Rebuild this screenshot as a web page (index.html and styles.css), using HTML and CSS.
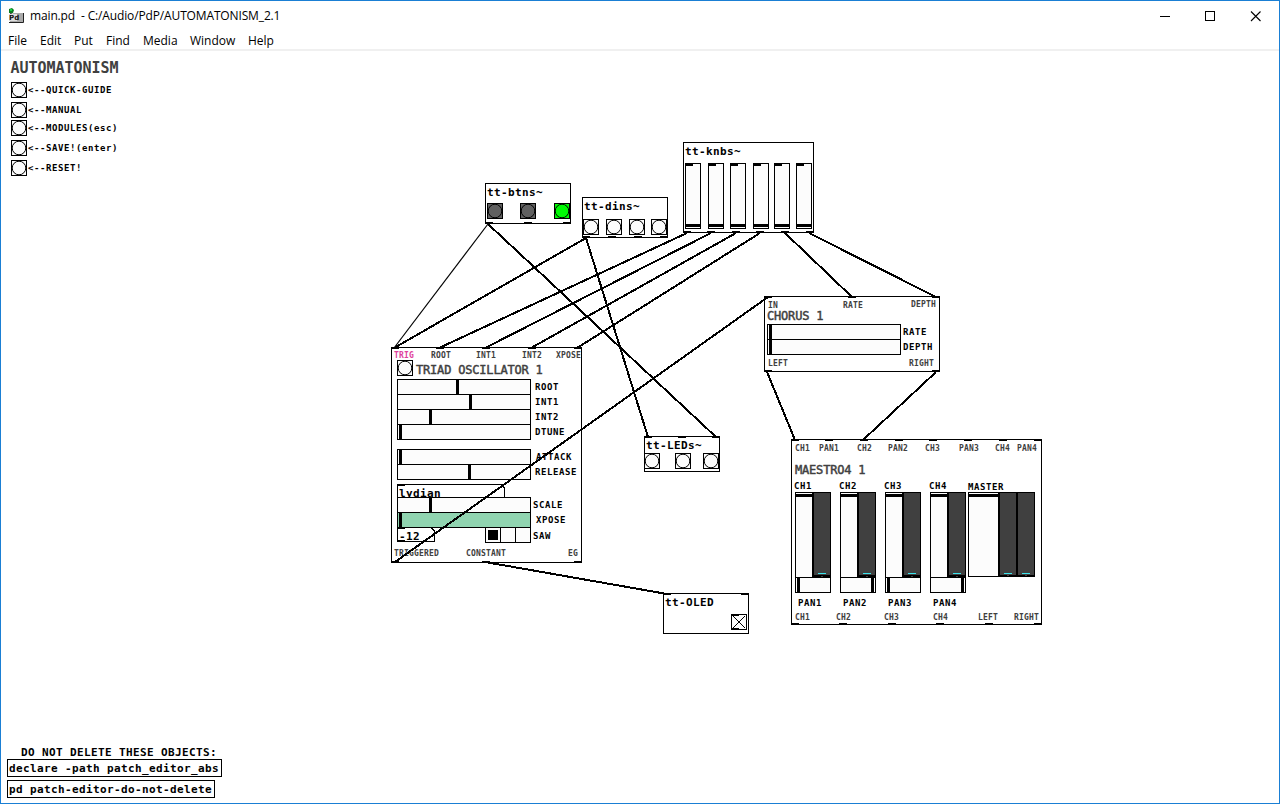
FILE: index.html
```html
<!DOCTYPE html>
<html lang="en">
<head>
<meta charset="utf-8">
<title>main.pd - C:/Audio/PdP/AUTOMATONISM_2.1</title>
<link rel="stylesheet" href="styles.css">
</head>
<body>
<div class="window">
  <header class="titlebar">
    <svg class="app-icon" width="16" height="16" viewBox="0 0 16 16">
      <path d="M1 1L4 0L6 2L5 5H1Z" fill="#0a7a20"/>
      <rect x="2" y="1" width="2" height="2" fill="#12d040"/>
      <path d="M3 5V8" stroke="#444" stroke-width="2"/>
      <path d="M6 5H15V14H2V6Z" fill="#a9a9a9"/>
      <path d="M1 6H9V13H1Z" fill="#dedede"/>
      <path d="M1 14.500H15.500V5" stroke="#222" fill="none"/>
      <text class="icon-text" x="1" y="12">Pd</text>
    </svg>
    <span class="title">main.pd&nbsp; - C:/Audio/PdP/AUTOMATONISM_2.1</span>
    <svg class="controls" width="120" height="20" viewBox="1150 5 120 20">
      <path d="M1160 15.500H1170M1205.500 10.500H1214.500V19.500H1205.500Z"/>
      <path class="close" d="M1251 10.500L1260.500 20M1260.500 10.500L1251 20"/>
    </svg>
  </header>
  <nav class="menubar">
    <span>File</span><span>Edit</span><span>Put</span><span>Find</span><span>Media</span><span>Window</span><span>Help</span>
  </nav>
  <svg class="patch" width="1278" height="752" viewBox="1 51 1278 752">
    <defs>
      <g id="bang"><rect x=".5" y=".5" width="15" height="15"/><circle class="ring" cx="8" cy="8" r="6.8"/></g>
      <rect id="port" width="8" height="2"/>
      <g id="knob"><rect class="face" x=".5" y=".5" width="15" height="65"/><path class="ink" d="M0 0H8V3H0ZM1 61H15V64H1Z"/></g>
      <g id="hs"><rect x=".5" y=".5" width="133" height="15"/></g>
      <rect id="tick" width="3" height="14"/>
      <g id="channel">
        <rect class="face" x=".5" y=".5" width="17" height="85"/>
        <rect class="ink" x="1" y="2" width="17" height="3"/>
        <rect class="ink" x="17" width="19" height="86"/>
        <rect class="meter" x="19" y="1" width="16" height="82"/>
        <rect class="level" x="23" y="81" width="8" height="1"/>
        <rect class="meter" x="26" y="84" width="2" height="1"/>
        <rect class="face" x=".5" y="85.500" width="35" height="15"/>
      </g>
    </defs>

    <!-- side menu -->
    <text class="heading" x="10.500" y="73">AUTOMATONISM</text>
    <g class="face">
      <use href="#bang" x="11" y="82"/><use href="#bang" x="11" y="102"/><use href="#bang" x="11" y="120"/><use href="#bang" x="11" y="140"/><use href="#bang" x="11" y="160"/>
    </g>
    <g class="label">
      <text x="28" y="93">&lt;--QUICK-GUIDE</text><text x="28" y="113">&lt;--MANUAL</text><text x="28" y="131">&lt;--MODULES(esc)</text><text x="28" y="151">&lt;--SAVE!(enter)</text><text x="28" y="171">&lt;--RESET!</text>
    </g>

    <!-- module outlines -->
    <g class="box">
      <rect x="485.500" y="183.500" width="85" height="40"/>
      <rect x="582.500" y="197.500" width="85" height="40"/>
      <rect x="683.500" y="142.500" width="130" height="90"/>
      <rect x="391.500" y="347.500" width="190" height="215"/>
      <rect x="764.500" y="296.500" width="175" height="75"/>
      <rect x="791.500" y="439.500" width="250" height="185"/>
      <rect x="644.500" y="436.500" width="75" height="35"/>
      <rect x="663.500" y="593.500" width="85" height="40"/>
      <rect x="7.500" y="759.500" width="214" height="17"/>
      <rect x="7.500" y="780.500" width="207" height="17"/>
    </g>

    <!-- tt-btns, tt-dins, tt-knbs -->
    <g class="name">
      <text x="487" y="196">tt-btns~</text><text x="584" y="210">tt-dins~</text><text x="685" y="155">tt-knbs~</text>
      <text x="646" y="449">tt-LEDs~</text><text x="665" y="606">tt-OLED</text>
      <text x="21" y="756">DO NOT DELETE THESE OBJECTS:</text>
      <text x="9" y="772">declare -path patch_editor_abs</text><text x="9" y="793">pd patch-editor-do-not-delete</text>
    </g>
    <g class="off"><use href="#bang" x="487" y="203"/><use href="#bang" x="520" y="203"/></g>
    <g class="on"><use href="#bang" x="554" y="203"/></g>
    <g class="face">
      <use href="#bang" x="583" y="219"/><use href="#bang" x="606" y="219"/><use href="#bang" x="629" y="219"/><use href="#bang" x="651" y="219"/>
      <use href="#bang" x="644" y="453"/><use href="#bang" x="675" y="453"/><use href="#bang" x="703" y="453"/>
      <rect x="731.500" y="614.500" width="15" height="15"/><path d="M733 616L745 628M745 616L733 628M731 615.500H739M731 628.500H739"/>
    </g>
    <use href="#knob" x="685" y="163"/><use href="#knob" x="708" y="163"/><use href="#knob" x="730" y="163"/><use href="#knob" x="753" y="163"/><use href="#knob" x="774" y="163"/><use href="#knob" x="796" y="163"/>

    <!-- triad oscillator -->
    <g class="small">
      <text class="pink" x="394" y="358">TRIG</text><text x="431" y="358">ROOT</text><text x="476" y="358">INT1</text><text x="522" y="358">INT2</text><text x="556" y="358">XPOSE</text>
      <text x="394" y="556">TRIGGERED</text><text x="466" y="556">CONSTANT</text><text x="568" y="556">EG</text>
    </g>
    <text class="module" x="416" y="374">TRIAD OSCILLATOR 1</text>
    <g class="box"><path d="M397.500 500V484.500H501L504.500 488V500"/></g>
    <text class="value" x="399" y="497">lydian</text>
    <g class="face">
      <use href="#bang" x="397" y="360"/>
      <use href="#hs" x="397" y="379"/><use href="#hs" x="397" y="394"/><use href="#hs" x="397" y="409"/><use href="#hs" x="397" y="424"/>
      <use href="#hs" x="397" y="449"/><use href="#hs" x="397" y="464"/>
      <use href="#hs" x="397" y="497"/>
      <path d="M485.500 527.500H530.500V542.500H485.500ZM500.500 527V542M515.500 527V542"/>
    </g>
    <g class="box"><path d="M397.500 527.500H431L434.500 531V541.500H397.500Z"/></g>
    <g class="green"><use href="#hs" x="397" y="512"/></g>
    <text class="value" x="399" y="540">-12</text>
    <g class="ink">
      <use href="#tick" x="456" y="380"/><use href="#tick" x="469" y="395"/><use href="#tick" x="429" y="410"/><use href="#tick" x="399" y="425"/>
      <use href="#tick" x="399" y="450"/><use href="#tick" x="468" y="465"/><use href="#tick" x="429" y="498"/><use href="#tick" x="399" y="513"/>
      <rect x="488" y="530" width="10" height="10"/>
      <use href="#port" x="397" y="484"/><use href="#port" x="397" y="527"/><use href="#port" x="397" y="540"/>
    </g>
    <g class="label">
      <text x="535" y="390">ROOT</text><text x="535" y="405">INT1</text><text x="535" y="420">INT2</text><text x="535" y="435">DTUNE</text>
      <text x="536" y="460">ATTACK</text><text x="535" y="475">RELEASE</text><text x="533" y="508">SCALE</text><text x="536" y="523">XPOSE</text><text x="533" y="539">SAW</text>
    </g>

    <!-- chorus -->
    <g class="small">
      <text x="768" y="308">IN</text><text x="843" y="308">RATE</text><text x="911" y="307">DEPTH</text><text x="768" y="366">LEFT</text><text x="909" y="366">RIGHT</text>
    </g>
    <text class="module" x="767" y="320">CHORUS 1</text>
    <g class="face"><use href="#hs" x="767" y="324"/><use href="#hs" x="767" y="339"/></g>
    <g class="ink"><use href="#tick" x="769" y="325"/><use href="#tick" x="769" y="340"/></g>
    <g class="label"><text x="903" y="335">RATE</text><text x="903" y="350">DEPTH</text></g>

    <!-- maestro mixer -->
    <g class="small">
      <text x="795" y="451">CH1</text><text x="819" y="451">PAN1</text><text x="857" y="451">CH2</text><text x="888" y="451">PAN2</text><text x="925" y="451">CH3</text><text x="959" y="451">PAN3</text><text x="995" y="451">CH4</text><text x="1017" y="451">PAN4</text>
      <text x="795" y="620">CH1</text><text x="836" y="620">CH2</text><text x="884" y="620">CH3</text><text x="933" y="620">CH4</text><text x="978" y="620">LEFT</text><text x="1014" y="620">RIGHT</text>
    </g>
    <text class="module" x="795" y="474">MAESTRO4 1</text>
    <g class="label">
      <text x="794" y="489">CH1</text><text x="839" y="489">CH2</text><text x="884" y="489">CH3</text><text x="929" y="489">CH4</text><text x="968" y="490">MASTER</text>
      <text x="798" y="606">PAN1</text><text x="843" y="606">PAN2</text><text x="888" y="606">PAN3</text><text x="933" y="606">PAN4</text>
    </g>
    <use href="#channel" x="795" y="492"/><use href="#channel" x="840" y="492"/><use href="#channel" x="885" y="492"/><use href="#channel" x="930" y="492"/>
    <g class="ink">
      <use href="#tick" x="797" y="578"/><use href="#tick" x="871" y="578"/><use href="#tick" x="887" y="578"/><use href="#tick" x="961" y="578"/>
    </g>
    <rect class="face" x="968.500" y="492.500" width="66" height="84"/>
    <path class="ink" d="M969 494H998V497H969ZM998 492H1035V577H998Z"/>
    <path class="meter" d="M1000 493H1016V575H1000ZM1018 493H1034V575H1018ZM1007 575H1009V576H1007ZM1025 575H1027V576H1025Z"/>
    <path class="level" d="M1004 573H1012V574H1004ZM1022 573H1030V574H1022Z"/>

    <!-- inlets and outlets -->
    <g class="ink">
      <use href="#port" x="485" y="222"/><use href="#port" x="524" y="222"/><use href="#port" x="563" y="222"/>
      <use href="#port" x="582" y="236"/><use href="#port" x="608" y="236"/><use href="#port" x="634" y="236"/><use href="#port" x="660" y="236"/>
      <use href="#port" x="683" y="231"/><use href="#port" x="707" y="231"/><use href="#port" x="732" y="231"/><use href="#port" x="756" y="231"/><use href="#port" x="781" y="231"/><use href="#port" x="806" y="231"/>
      <use href="#port" x="391" y="347"/><use href="#port" x="436" y="347"/><use href="#port" x="482" y="347"/><use href="#port" x="528" y="347"/><use href="#port" x="574" y="347"/>
      <use href="#port" x="391" y="561"/><use href="#port" x="482" y="561"/><use href="#port" x="574" y="561"/>
      <use href="#port" x="764" y="296"/><use href="#port" x="848" y="296"/><use href="#port" x="932" y="296"/><use href="#port" x="764" y="370"/><use href="#port" x="932" y="370"/>
      <use href="#port" x="791" y="439"/><use href="#port" x="825" y="439"/><use href="#port" x="860" y="439"/><use href="#port" x="895" y="439"/><use href="#port" x="929" y="439"/><use href="#port" x="964" y="439"/><use href="#port" x="999" y="439"/><use href="#port" x="1034" y="439"/>
      <use href="#port" x="791" y="623"/><use href="#port" x="839" y="623"/><use href="#port" x="888" y="623"/><use href="#port" x="936" y="623"/><use href="#port" x="985" y="623"/><use href="#port" x="1034" y="623"/>
      <use href="#port" x="644" y="436"/><use href="#port" x="678" y="436"/><use href="#port" x="712" y="436"/>
      <use href="#port" x="663" y="593"/><use href="#port" x="741" y="593"/>
    </g>

    <!-- patch cords -->
    <path class="cord thin" d="M488 224L394 348"/>
    <path class="cord" d="M488 224L716 437M586 238L394 348M586 238L648 437M687 233L439 348M711 233L485 348M736 233L531 348M760 233L577 348M785 233L852 297M809 233L936 297M395 562L768 297M485 562L667 594M767 372L795 440M936 372L863 440"/>
  </svg>
</div>
</body>
</html>
```
FILE: styles.css
```css
* { box-sizing: border-box; }
body { margin: 0; background: #fff; overflow: hidden; }
.window {
  width: 1280px;
  height: 804px;
  border: 1px solid #1a7fd4;
  display: flex;
  flex-direction: column;
  background: #fff;
  font: 12px/16px "Open Sans", "Noto Sans", sans-serif;
  color: #000;
}
.titlebar { height: 30px; flex: none; display: flex; align-items: center; padding: 0 9px 0 7px; }
.title { margin-left: 6px; flex: 1; letter-spacing: -.14px; }
.app-icon { flex: none; }
.icon-text { font: bold 7px "DejaVu Sans", sans-serif; fill: #111; }
.controls { fill: none; stroke: #000; shape-rendering: crispEdges; }
.controls .close { shape-rendering: auto; stroke-width: 1.1; }
.menubar {
  height: 20px;
  flex: none;
  display: grid;
  grid-template-columns: 32px 34px 32px 37px 47px 58px 40px;
  align-items: center;
  padding: 2px 0 0 7px;
  border-bottom: 2px solid #f0f0f0;
}
.patch { display: block; flex: none; font: bold 12px "DejaVu Sans Mono", monospace; shape-rendering: crispEdges; }
.patch text { white-space: pre; }
.heading { font-size: 15px; fill: #404040; letter-spacing: -.03px; }
.module { font-size: 12px; fill: #404040; letter-spacing: -.19px; font-weight: normal; stroke: #404040; stroke-width: .45px; }
.name { letter-spacing: .378px; font-size: 11px; }
.value { letter-spacing: .378px; font-size: 11px; }
.label { font-size: 9px; letter-spacing: .58px; }
.small { font-size: 8px; letter-spacing: .184px; fill: #404040; }
.pink { fill: #e0409c; }
.ring { shape-rendering: auto; }
.box { fill: #fff; stroke: #000; }
.face { fill: #fcfcfc; stroke: #000; }
.off { fill: #606060; stroke: #000; }
.on { fill: #00fc04; stroke: #000; }
.green { fill: #90d4b0; stroke: #000; }
.ink { fill: #000; stroke: none; }
.meter { fill: #404040; stroke: none; }
.level { fill: #3ce4ec; stroke: none; }
.cord { fill: none; stroke: #000; stroke-width: 2; }
.thin { stroke-width: 1.2; shape-rendering: auto; }
```
